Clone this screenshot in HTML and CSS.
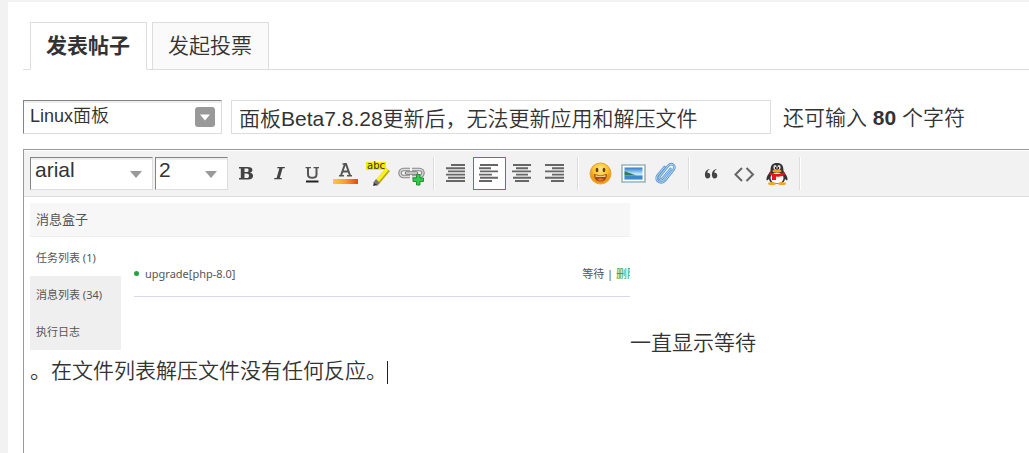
FILE: index.html
```html
<!DOCTYPE html>
<html lang="zh-CN">
<head>
<meta charset="utf-8">
<title>发表帖子</title>
<link rel="stylesheet" href="styles.css">
</head>
<body>
<main class="sheet">
  <nav class="tabs">
    <a class="tab tab-current" href="#post">发表帖子</a>
    <a class="tab" href="#poll">发起投票</a>
  </nav>

  <form class="post-form">
    <div class="subject-row">
      <span class="picker picker-category">
        <select aria-label="主题分类"><option>Linux面板</option></select>
        <svg class="picker-arrow" width="20" height="20" viewBox="0 0 20 20"><rect width="20" height="20" rx="3" fill="#999"/><path d="M5 7.500h10l-5 6z" fill="#fff"/></svg>
      </span>
      <input class="subject" type="text" aria-label="标题" value="面板Beta7.8.28更新后，无法更新应用和解压文件">
      <span class="remaining">还可输入 <strong>80</strong> 个字符</span>
    </div>

    <section class="editor">
      <div class="toolbar" role="toolbar" aria-label="编辑器">
        <span class="picker picker-font">
          <select aria-label="字体"><option>arial</option></select>
          <svg class="picker-arrow" width="12" height="7" viewBox="0 0 12 7"><path d="M0 0h12L6 7z" fill="#999"/></svg>
        </span>
        <span class="picker picker-size">
          <select aria-label="字号"><option>2</option></select>
          <svg class="picker-arrow" width="12" height="7" viewBox="0 0 12 7"><path d="M0 0h12L6 7z" fill="#999"/></svg>
        </span>

        <div class="tools">
          <button class="tool" type="button" aria-label="粗体">
            <svg width="26" height="26" viewBox="0 0 26 26"><path fill="#444" fill-rule="evenodd" d="M5 6h8.500c3.500 0 4.900 1.200 4.900 3 0 1.400-.9 2.300-2.500 2.700 2.100.3 3.200 1.400 3.200 3.100 0 2.200-1.700 3.700-5 3.700H5V17h1.800V7.500H5zM10.500 7.500V11h1.700c1.600 0 2.400-.5 2.400-1.800s-.7-1.700-2.200-1.700zm0 5V17h2c1.700 0 2.500-.7 2.500-2.300 0-1.500-.9-2.200-2.600-2.200z"/></svg>
          </button>
          <button class="tool" type="button" aria-label="斜体">
            <svg width="26" height="26" viewBox="0 0 26 26"><path fill="#444" d="M10.500 6H18l-.4 1.300h-2L12.800 17H15l-.4 1.300H7l.4-1.300h2.200l2.800-9.700h-2.300z"/></svg>
          </button>
          <button class="tool" type="button" aria-label="下划线">
            <svg width="26" height="26" viewBox="0 0 26 26"><path fill="none" stroke="#555" stroke-width="1.300" d="M5.500 6.700H11M13.500 6.700H19"/><path fill="none" stroke="#555" stroke-width="2" d="M8 7v6.500c0 2.500 1.300 3.300 4.200 3.300s4.300-.8 4.300-3.300V7"/><path stroke="#222" stroke-width="2" d="M6 20.500h12.500"/></svg>
          </button>
          <button class="tool" type="button" aria-label="文字颜色">
            <svg width="26" height="26" viewBox="0 0 26 26"><defs><linearGradient id="ink"><stop stop-color="#fccb3a"/><stop offset=".5" stop-color="#f99b32"/><stop offset="1" stop-color="#e84615"/></linearGradient></defs><path fill="none" stroke="#555" stroke-width="2" d="M8 14.500L12 3h1l4 11.500M9.500 10.500h6.500"/><path stroke="#555" stroke-width="1.400" d="M6 14.800h5M14 14.800h5M9.500 3h3.500"/><path fill="url(#ink)" d="M0 18h25v5H0z"/></svg>
          </button>
          <button class="tool" type="button" aria-label="背景色">
            <svg width="30" height="30" viewBox="0 0 30 30"><path fill="#f3ec00" d="M2 3h20v8H2z"/><text class="mark-letters" x="3" y="10">abc</text><path fill="#b5aa20" d="M22 9l4 3-10 12-4-3z"/><path fill="#fff21a" d="M22 9l2.500 2-10 12-2.500-2z"/><path fill="#777" d="M12 20l4 4-3 3-4-3z"/><path fill="#222" d="M10 24l3 2-4 1z"/></svg>
          </button>
          <button class="tool" type="button" aria-label="添加链接">
            <svg width="28" height="26" viewBox="0 0 28 26"><g fill="none"><path stroke="#888" stroke-width="3.500" d="M12 8.500H5.500a3.500 3.500 0 0 0 0 7H12M14 8.500h7.500a3.500 3.500 0 0 1 0 7H14"/><path stroke="#ddd" stroke-width="1.300" d="M12 8.500H5.500a3.500 3.500 0 0 0 0 7H12M14 8.500h7.500a3.500 3.500 0 0 1 0 7H14"/><path stroke="#777" stroke-width="3.500" stroke-linecap="round" d="M8.500 12h10"/><path stroke="#eee" stroke-width="1.300" d="M8 12h11"/></g><path fill="#39c84b" stroke="#219336" d="M18.500 13.500h3.500V17h3.500v3.500H22V24h-3.500v-3.500H15V17h3.500z"/></svg>
          </button>
        </div>
        <div class="tools">
          <button class="tool" type="button" aria-label="自动排版">
            <svg width="22" height="22" viewBox="0 0 22 22"><path stroke="#666" stroke-width="1.900" d="M5 2h14M0 5.200h19M2 8.400h17M0 11.600h19M2 14.800h17M0 18h19"/></svg>
          </button>
          <button class="tool tool-active" type="button" aria-label="居左" aria-pressed="true">
            <svg width="22" height="22" viewBox="0 0 22 22"><path stroke="#666" stroke-width="1.900" d="M1 2h18M0 5.200h12M1 8.400h18M0 11.600h13M1 14.800h18M0 18h13"/></svg>
          </button>
          <button class="tool" type="button" aria-label="居中">
            <svg width="22" height="22" viewBox="0 0 22 22"><path stroke="#666" stroke-width="1.900" d="M1 2h18M4 5.200h12M0 8.400h19M4 11.600h12M1 14.800h18M3 18h14"/></svg>
          </button>
          <button class="tool" type="button" aria-label="居右">
            <svg width="22" height="22" viewBox="0 0 22 22"><path stroke="#666" stroke-width="1.900" d="M0 2h19M7 5.200h12M0 8.400h19M7 11.600h12M0 14.800h19M6 18h13"/></svg>
          </button>
        </div>
        <div class="tools">
          <button class="tool" type="button" aria-label="表情">
            <svg width="24" height="24" viewBox="0 0 24 24"><defs><radialGradient id="face" cy=".3"><stop stop-color="#ffe98a"/><stop offset=".65" stop-color="#fdc62f"/><stop offset="1" stop-color="#ed9a18"/></radialGradient></defs><circle cx="11.500" cy="11.500" r="10.500" fill="url(#face)" stroke="#e9a433"/><ellipse cx="8" cy="8" rx="1.400" ry="2.200" fill="#69400c"/><ellipse cx="15" cy="8" rx="1.400" ry="2.200" fill="#69400c"/><path fill="#a34b08" d="M5 12c4 1.500 9 1.500 13 0 0 5-2.500 7.500-6.500 7.500S5 17 5 12z"/><path fill="#fff3cf" d="M6.500 13.200c3 .8 7 .8 10 0v1.500h-10z"/><path fill="#e97531" d="M8.500 17.800c1.500-2 4.500-2 6 0-1.500 1.300-4.500 1.300-6 0z"/></svg>
          </button>
          <button class="tool" type="button" aria-label="图片">
            <svg width="26" height="22" viewBox="0 0 26 22"><defs><linearGradient id="sky" x2="0" y2="1"><stop stop-color="#2879cf"/><stop offset=".55" stop-color="#c7e9f8"/></linearGradient></defs><path fill="#fff" stroke="#9bb5b8" stroke-width="1.600" d="M1 2h23v17H1z"/><path fill="url(#sky)" d="M3.500 4.500h18v12h-18z"/><path fill="#327a52" d="M3.500 8.500c2-.5 3 1 5 1.500s4 1.700 7 2.500h-12z"/><path fill="#3d89c9" d="M3.500 12.500h18v4h-18z"/></svg>
          </button>
          <button class="tool" type="button" aria-label="附件">
            <svg width="26" height="26" viewBox="0 0 26 26"><g fill="none" stroke-linecap="round" transform="translate(-1 -1)"><path stroke="#639bd0" stroke-width="2.600" d="M17.500 9l-8 9.500c-2 2-4.500 0-3-2.200L15 6c3.500-4 8.500-.5 5.500 3.700L12.500 20c-4 5-11.500.8-8-4.500l7-8.500"/><path stroke="#b6d6ef" d="M17.500 9l-8 9.500c-2 2-4.500 0-3-2.200L15 6c3.500-4 8.500-.5 5.500 3.700L12.500 20c-4 5-11.500.8-8-4.500l7-8.500"/></g></svg>
          </button>
        </div>
        <div class="tools">
          <button class="tool" type="button" aria-label="引用">
            <svg width="22" height="22" viewBox="0 0 22 22"><g fill="#444" transform="translate(-1)"><path d="M9.500 6.500c-1.700.7-2.300 2.200-2 3.300 1.700-.2 2.800.9 2.800 2.700s-1.100 3-2.700 3c-1.900 0-2.700-1.500-2.700-3.900 0-3 1.700-5.100 4.600-5.600zM16.500 6.500c-1.700.7-2.300 2.200-2 3.300 1.700-.2 2.800.9 2.800 2.700s-1.100 3-2.700 3c-1.900 0-2.700-1.500-2.700-3.900 0-3 1.700-5.100 4.600-5.600z"/></g></svg>
          </button>
          <button class="tool" type="button" aria-label="代码">
            <svg width="22" height="22" viewBox="0 0 22 22"><path fill="none" stroke="#666" stroke-width="2" d="M8 5l-6.500 6.500L8 18M12.500 5l6.500 6.500-6.500 6.500"/></svg>
          </button>
          <button class="tool" type="button" aria-label="QQ">
            <svg width="24" height="26" viewBox="0 0 24 26"><path fill="#333" d="M4.500 10C4.500 4 6.500 2 11 2s6.500 2 6.500 8c2 3 4.500 6 4 9-.7 1-2-.5-2.500-1-.5 3-3 5-8 5s-7.500-2-8-5c-.5.500-1.800 2-2.500 1-.5-3 2-6 4-9z"/><ellipse cx="11" cy="17" rx="6.500" ry="5.500" fill="#fff"/><ellipse cx="9" cy="6.500" rx="1.600" ry="2.400" fill="#ddd"/><ellipse cx="13" cy="6.500" rx="1.600" ry="2.400" fill="#ddd"/><path fill="#222" d="M9 6h1v2H9zM12 6h1v2h-1z"/><ellipse cx="11" cy="10" rx="4.500" ry="1.500" fill="#f5a21a"/><path fill="#e5141d" d="M3.500 11c4 2.500 11 2.500 15 0l.5 3c-3 1.500-6 2-9 1.500V19H6v-4.500l-2.500-1z"/><ellipse cx="6" cy="22.500" rx="4" ry="1.500" fill="#f3a524"/><ellipse cx="16" cy="22.500" rx="4" ry="1.500" fill="#f3a524"/></svg>
          </button>
        </div>
      </div>

      <div class="canvas" contenteditable="true" role="textbox" aria-multiline="true" aria-label="正文" spellcheck="false">
        <div class="message-box">
          <div class="message-title">消息盒子</div>
          <div class="message-body">
            <div class="message-menu">
              <div class="menu-item menu-item-current">任务列表 (1)</div>
              <div class="menu-item">消息列表 (34)</div>
              <div class="menu-item">执行日志</div>
            </div>
            <div class="task">
              <span class="task-dot"></span>
              <span class="task-name">upgrade[php-8.0]</span>
              <span class="task-state">等待 | <span class="task-delete">删除</span></span>
            </div>
          </div>
        </div>一直显示等待<br>。在文件列表解压文件没有任何反应。<span class="caret"></span>
      </div>
    </section>
  </form>
</main>
</body>
</html>
```

FILE: styles.css
```css
* {
  box-sizing: border-box;
}

body {
  margin: 0;
  padding: 2px 0 0 8px;
  background: #f2f2f2;
  color: #333;
  font: 350 21px/28px "Liberation Sans", "Noto Sans CJK SC", sans-serif;
}

strong {
  font-weight: 700;
}

.sheet {
  display: flex;
  flex-direction: column;
  min-height: calc(100vh - 2px);
  padding: 20px 0 0 15px;
  background: #fff;
  overflow: hidden;
}

.tabs {
  display: flex;
  gap: 5px;
  padding-left: 7px;
  border-bottom: 1px solid #ddd;
}

.tab {
  margin-bottom: -1px;
  padding: 9px 16px 9px 15px;
  border: 1px solid #ddd;
  background: #fafafa;
  color: #333;
  text-decoration: none;
}

.tab-current {
  border-bottom-color: #fff;
  background: #fff;
  font-weight: bold;
}

.post-form {
  display: flex;
  flex: 1;
  flex-direction: column;
  gap: 15px;
  padding-top: 30px;
}

.subject-row {
  display: flex;
  align-items: center;
}

.picker {
  position: relative;
  display: flex;
}

.picker select {
  width: 100%;
  margin: 0;
  border: 1px solid #ddd;
  border-top-color: #848484;
  border-left-color: #848484;
  border-radius: 0;
  background: #fff;
  box-shadow: inset 0 2px 1px #eee;
  color: #333;
  font: inherit;
  appearance: none;
}

.picker-arrow {
  position: absolute;
  pointer-events: none;
}

.picker-category {
  width: 199px;
  font-size: 18px;
}

.picker-category select {
  height: 34px;
  padding: 0 30px 2px 6px;
}

.picker-category .picker-arrow {
  top: 7px;
  right: 7px;
}

.subject {
  width: 540px;
  height: 34px;
  margin-left: 9px;
  padding: 0 7px;
  border: 1px solid #ddd;
  color: #333;
  font: inherit;
}

.remaining {
  margin-left: 12px;
  padding-top: 2px;
  white-space: nowrap;
}

.editor {
  display: flex;
  flex: 1;
  flex-direction: column;
  border-top: 1px solid #999;
  border-left: 1px solid #999;
}

.toolbar {
  display: flex;
  align-items: center;
  padding: 6px;
  border-top: 1px solid #fff;
  border-bottom: 1px solid #ddd;
  background: #f2f2f2;
}

.toolbar .picker {
  margin-right: 2px;
}

.toolbar select {
  height: 33px;
  padding: 0 24px 8px 4px;
  line-height: 22px;
}

.toolbar .picker-arrow {
  top: 14px;
  right: 11px;
}

.picker-font {
  width: 123px;
}

.picker-size {
  width: 73px;
}

.toolbar .picker-size select {
  padding-left: 3px;
}

.tools {
  display: flex;
  padding-right: 5px;
  border-right: 1px solid #ddd;
  box-shadow: 1px 0 #fff;
}

.tools + .tools {
  padding-left: 6px;
}

.tool {
  display: flex;
  align-items: center;
  justify-content: center;
  width: 33px;
  height: 33px;
  padding: 0;
  border: 1px solid transparent;
  background: none;
}

.tool svg {
  flex: none;
}

.tool-active {
  border-color: #09c;
  background: #fff;
}

.mark-letters {
  fill: #333;
  font: 10px "DejaVu Sans", sans-serif;
}

.canvas {
  flex: 1;
  padding: 6px;
  outline: none;
}

.message-box {
  display: inline-block;
  width: 600px;
  overflow: hidden;
  vertical-align: baseline;
  color: #555;
  font: 400 11px/37px "Noto Sans", "Noto Sans CJK SC", sans-serif;
  white-space: nowrap;
}

.message-title {
  padding-left: 6px;
  border-bottom: 1px solid #eee;
  background: #f7f7f7;
  font-size: 13px;
  line-height: 33px;
}

.message-body {
  display: grid;
  grid-template-columns: 91px 1fr;
  align-items: start;
  gap: 13px;
}

.menu-item {
  padding-left: 6px;
  background: #efefef;
}

.menu-item-current {
  padding-top: 2px;
  background: #fff;
}

.task {
  display: flex;
  align-items: center;
  padding-top: 14px;
  border-bottom: 1px solid #d8d8e8;
  line-height: 45px;
}

.task-dot {
  width: 5px;
  height: 5px;
  margin-right: 6px;
  border-radius: 50%;
  background: #20a53a;
}

.task-state {
  margin-left: auto;
  margin-right: -8px;
}

.task-delete {
  color: #20a53a;
}

.caret {
  display: inline-block;
  width: 1px;
  height: 23px;
  background: #222;
  vertical-align: middle;
}
```
